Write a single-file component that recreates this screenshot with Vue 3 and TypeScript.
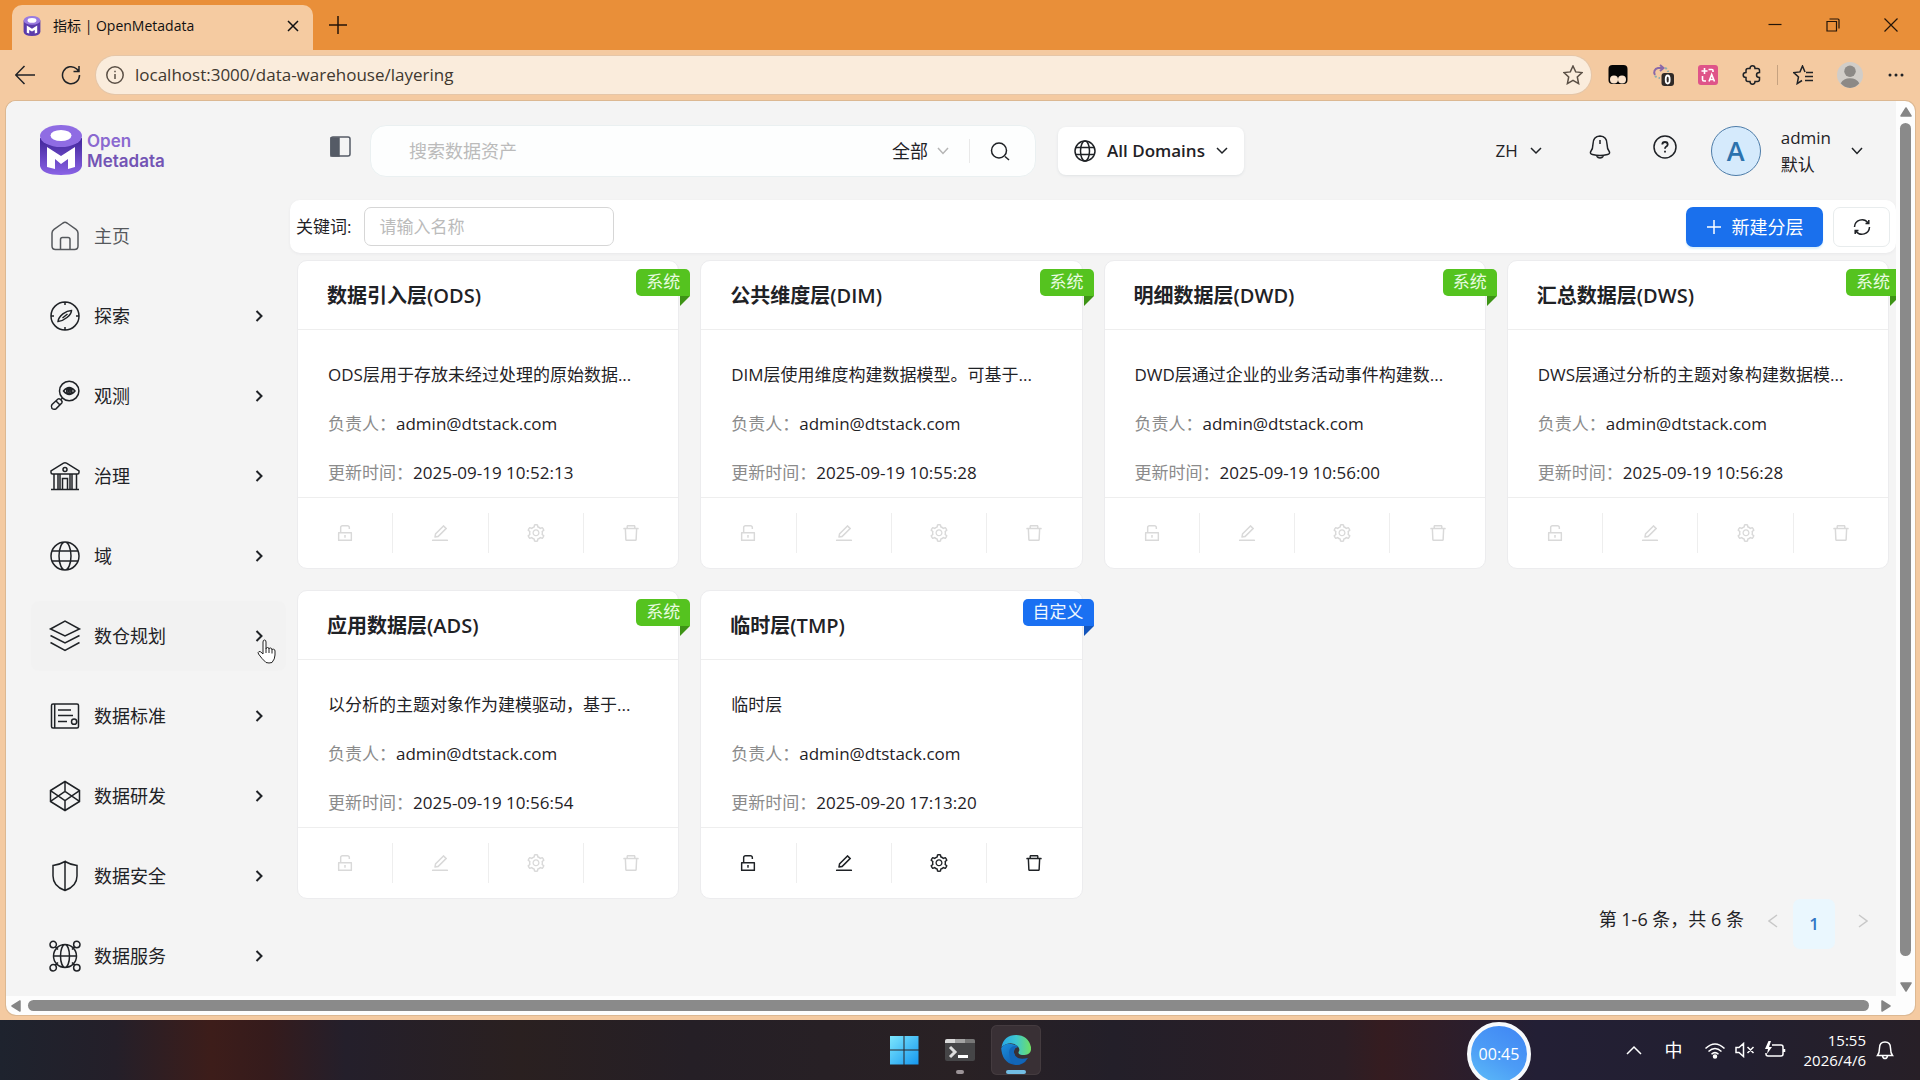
<script setup lang="ts">
import { ref } from 'vue'

interface NavItem {
  label: string
  icon: string
  muted?: boolean
  active?: boolean
}

interface LayerCard {
  name: string
  code: string
  description: string
  updatedAt: string
  custom?: boolean
}

const url = ref('localhost:3000/data-warehouse/layering')
const search = ref('')
const scope = ref('全部')
const keyword = ref('')

const navItems: NavItem[] = [
  {
    label: '主页',
    muted: true,
    icon: 'M2 12Q2 9.8 4 8.3L13 2Q15 .7 17 2L26 8.3Q28 9.8 28 12V25Q28 28.5 24.5 28.5H5.5Q2 28.5 2 25ZM10.5 28.5V18.5Q10.5 16.5 12.5 16.5H18Q20 16.5 20 18.5V28.5',
  },
  {
    label: '探索',
    icon: 'M1 15a14 14 0 1 0 28 0a14 14 0 1 0-28 0M15 1v3M15 26v3M1 15h3M26 15h3M8 20.5C8.5 15 16 9.5 21.5 9.5C21.5 14 14 20 8 20.5ZM12.5 17L17.5 13',
  },
  {
    label: '观测',
    icon: 'M9.5 10a9.7 9.7 0 1 0 19.4 0a9.7 9.7 0 1 0-19.4 0M13.5 10Q19.2 3 25 10Q19.2 17 13.5 10ZM16.7 10a2.6 2.6 0 1 0 5.2 0a2.6 2.6 0 1 0-5.2 0M18.3 10a1 1 0 1 0 2 0a1 1 0 1 0-2 0M12.5 17L10.3 19M2 23.5L8 18Q9 17.2 10.2 18.3L11.5 19.5Q12.7 21 11.8 22L6 27.8Q4 29 2 27.5Q.6 25.5 2 23.5ZM6 20l4 4',
  },
  {
    label: '治理',
    icon: 'M1 11.5V9.8L13.5 2.2Q15 1.3 16.5 2.2L29 9.8V11.5Q29 13 27.5 13H2.5Q1 13 1 11.5ZM13 8.5a2 2 0 1 0 4 0a2 2 0 1 0-4 0M1 28.5H29M4 13V28M8 13V28M10 13V28M20 13V28M22 13V28M26.5 13V28M12.5 28V17.5H17.5V28',
  },
  {
    label: '域',
    icon: 'M1 15a14 14 0 1 0 28 0a14 14 0 1 0-28 0M9 15a6 14 0 1 0 12 0a6 14 0 1 0-12 0M2 10H28M2 20H28',
  },
  {
    label: '数仓规划',
    active: true,
    icon: 'M.5 8L15 0L29.5 8L15 15ZM.5 14.5L15 22L29.5 14.5M.5 21.5L15 29.5L29.5 21.5',
  },
  {
    label: '数据标准',
    icon: 'M3 3H27Q28.5 3 28.5 4.5V25.5Q28.5 27 27 27H3Q1.5 27 1.5 25.5V4.5Q1.5 3 3 3ZM4.7 3V27M8 9H21M8 14.5H23M8 20.5H17M21.5 20.7a2.6 2.6 0 1 0 5.2 0a2.6 2.6 0 1 0-5.2 0',
  },
  {
    label: '数据研发',
    icon: 'M15 .5L29.5 9.5V20.5L15 29.5L.5 20.5V9.5ZM15 .5V10.5M15 19.5V29.5M.5 9.7L15 19.5L29.5 9.7M.5 20.3L15 10.5L29.5 20.3',
  },
  {
    label: '数据安全',
    icon: 'M15 .5Q20 3.5 27 4.5V15C27 22 22 27 15 29.5C8 27 3 22 3 15V4.5Q10 3.5 15 .5V29.5',
  },
  {
    label: '数据服务',
    icon: 'M3.5 15a11.5 11.5 0 1 0 23 0a11.5 11.5 0 1 0-23 0M10.5 15a4.5 11.5 0 1 0 9 0a4.5 11.5 0 1 0-9 0M3.5 15H26.5M0 3.5a3.2 3.2 0 1 0 6.4 0a3.2 3.2 0 1 0-6.4 0M23.6 3.5a3.2 3.2 0 1 0 6.4 0a3.2 3.2 0 1 0-6.4 0M0 26.7a3.2 3.2 0 1 0 6.4 0a3.2 3.2 0 1 0-6.4 0M23.6 26.7a3.2 3.2 0 1 0 6.4 0a3.2 3.2 0 1 0-6.4 0M5.5 6L8 8.5M24.5 6L22 8.5M5.5 24L8 21.5M24.5 24L22 21.5',
  },
]

const layers: LayerCard[] = [
  { name: '数据引入层', code: '(ODS)', description: 'ODS层用于存放未经过处理的原始数据...', updatedAt: '2025-09-19 10:52:13' },
  { name: '公共维度层', code: '(DIM)', description: 'DIM层使用维度构建数据模型。可基于...', updatedAt: '2025-09-19 10:55:28' },
  { name: '明细数据层', code: '(DWD)', description: 'DWD层通过企业的业务活动事件构建数...', updatedAt: '2025-09-19 10:56:00' },
  { name: '汇总数据层', code: '(DWS)', description: 'DWS层通过分析的主题对象构建数据模...', updatedAt: '2025-09-19 10:56:28' },
  { name: '应用数据层', code: '(ADS)', description: '以分析的主题对象作为建模驱动，基于...', updatedAt: '2025-09-19 10:56:54' },
  { name: '临时层', code: '(TMP)', description: '临时层', updatedAt: '2025-09-20 17:13:20', custom: true },
]

const actions = [
  {
    label: '解锁',
    path: 'M832 464H332V240c0-30.9 25.1-56 56-56h248c30.9 0 56 25.1 56 56v68c0 4.4 3.6 8 8 8h56c4.4 0 8-3.6 8-8v-68c0-70.7-57.3-128-128-128H388c-70.7 0-128 57.3-128 128v224h-68c-17.7 0-32 14.3-32 32v384c0 17.7 14.3 32 32 32h640c17.7 0 32-14.3 32-32V496c0-17.7-14.3-32-32-32zm-40 376H232V536h560v304zM484 701v53c0 4.4 3.6 8 8 8h40c4.4 0 8-3.6 8-8v-53a48.01 48.01 0 10-56 0z',
  },
  {
    label: '编辑',
    path: 'M257.7 752c2 0 4-.2 6-.5L431.9 722c2-.4 3.9-1.3 5.3-2.8l423.9-423.9a9.96 9.96 0 000-14.1L694.9 114.9c-1.9-1.9-4.4-2.9-7.1-2.9s-5.2 1-7.1 2.9L256.8 538.8c-1.5 1.5-2.4 3.3-2.8 5.3l-29.5 168.2a33.5 33.5 0 009.4 29.8c6.6 6.4 14.9 9.9 23.8 9.9zm67.4-174.4L687.8 215l73.3 73.3-362.7 362.6-88.9 15.7 15.6-89zM880 836H144c-17.7 0-32 14.3-32 32v36c0 4.4 3.6 8 8 8h784c4.4 0 8-3.6 8-8v-36c0-17.7-14.3-32-32-32z',
  },
  {
    label: '设置',
    path: 'M924.8 625.7l-65.5-56c3.1-19 4.7-38.4 4.7-57.8s-1.6-38.8-4.7-57.8l65.5-56a32.03 32.03 0 009.3-35.2l-.9-2.6a443.74 443.74 0 00-79.7-137.9l-1.8-2.1a32.12 32.12 0 00-35.1-9.5l-81.3 28.9c-30-24.6-63.5-44-99.7-57.6l-15.7-85a32.05 32.05 0 00-25.8-25.7l-2.7-.5c-52.1-9.4-106.9-9.4-159 0l-2.7.5a32.05 32.05 0 00-25.8 25.7l-15.8 85.4a351.86 351.86 0 00-99 57.4l-81.9-29.1a32 32 0 00-35.1 9.5l-1.8 2.1a446.02 446.02 0 00-79.7 137.9l-.9 2.6c-4.5 12.5-.8 26.5 9.3 35.2l66.3 56.6c-3.1 18.8-4.6 38-4.6 57.1 0 19.2 1.5 38.4 4.6 57.1L99 625.5a32.03 32.03 0 00-9.3 35.2l.9 2.6c18.1 50.4 44.9 96.9 79.7 137.9l1.8 2.1a32.12 32.12 0 0035.1 9.5l81.9-29.1c29.8 24.5 63.1 43.9 99 57.4l15.8 85.4a32.05 32.05 0 0025.8 25.7l2.7.5a449.4 449.4 0 00159 0l2.7-.5a32.05 32.05 0 0025.8-25.7l15.7-85a350 350 0 0099.7-57.6l81.3 28.9a32 32 0 0035.1-9.5l1.8-2.1c34.8-41.1 61.6-87.5 79.7-137.9l.9-2.6c4.5-12.3.8-26.3-9.3-35zM788.3 465.9c2.5 15.1 3.8 30.6 3.8 46.1s-1.3 31-3.8 46.1l-6.6 40.1 74.7 63.9a370.03 370.03 0 01-42.6 73.6L721 702.8l-31.4 25.8c-23.9 19.6-50.5 35-79.3 45.8l-38.1 14.3-17.9 97a377.5 377.5 0 01-85 0l-17.9-97.2-37.8-14.5c-28.5-10.8-55-26.2-78.7-45.7l-31.4-25.9-93.4 33.2c-17-22.9-31.2-47.6-42.6-73.6l75.5-64.5-6.5-40c-2.4-14.9-3.7-30.3-3.7-45.5 0-15.3 1.2-30.6 3.7-45.5l6.5-40-75.5-64.5c11.3-26.1 25.6-50.7 42.6-73.6l93.4 33.2 31.4-25.9c23.7-19.5 50.2-34.9 78.7-45.7l37.9-14.3 17.9-97.2c28.1-3.2 56.8-3.2 85 0l17.9 97 38.1 14.3c28.7 10.8 55.4 26.2 79.3 45.8l31.4 25.8 92.8-32.9c17 22.9 31.2 47.6 42.6 73.6L781.8 426l6.5 39.9zM512 326c-97.2 0-176 78.8-176 176s78.8 176 176 176 176-78.8 176-176-78.8-176-176-176zm79.2 255.2A111.6 111.6 0 01512 614c-29.9 0-58-11.7-79.2-32.8A111.6 111.6 0 01400 502c0-29.9 11.7-58 32.8-79.2C454 401.6 482.1 390 512 390c29.9 0 58 11.6 79.2 32.8A111.6 111.6 0 01624 502c0 29.9-11.7 58-32.8 79.2z',
  },
  {
    label: '删除',
    path: 'M360 184h-8c4.4 0 8-3.6 8-8v8h304v-8c0 4.4 3.6 8 8 8h-8v72h72v-80c0-35.3-28.7-64-64-64H352c-35.3 0-64 28.7-64 64v80h72v-72zm504 72H160c-17.7 0-32 14.3-32 32v32c0 4.4 3.6 8 8 8h60.4l24.7 523c1.6 34.1 29.8 61 63.9 61h454c34.2 0 62.3-26.8 63.9-61l24.7-523H888c4.4 0 8-3.6 8-8v-32c0-17.7-14.3-32-32-32zM731.3 840H292.7l-24.2-512h487l-24.2 512z',
  },
]
</script>

<template>
  <div class="desktop">
    <header class="tab-strip">
      <div class="tab">
        <svg class="favicon" viewBox="0 0 42 50">
          <path d="M0 11V40Q2 50 21 50T42 40V11Z" fill="#5b3cab" />
          <ellipse cx="21" cy="11" rx="21" ry="11" fill="#9a7be0" />
          <ellipse cx="21" cy="11" rx="11" ry="6" fill="#fff" />
          <path d="M8 24L21 32L34 24V42L28 44V35L21 39L14 35V44L8 42Z" fill="#fff" />
        </svg>
        <span class="tab-title">指标 | OpenMetadata</span>
        <button class="icon-btn" aria-label="关闭标签页">
          <svg width="12" height="12" viewBox="0 0 12 12"><path d="M1 1L11 11M11 1L1 11" /></svg>
        </button>
      </div>
      <button class="icon-btn new-tab" aria-label="新建标签页">
        <svg width="20" height="20" viewBox="0 0 20 20"><path d="M10 1V19M1 10H19" /></svg>
      </button>
      <div class="window-controls">
        <button class="icon-btn" aria-label="最小化">
          <svg width="14" height="14" viewBox="0 0 14 14"><path d="M.5 6.5H13.5" /></svg>
        </button>
        <button class="icon-btn" aria-label="还原">
          <svg width="14" height="14" viewBox="0 0 14 14"><path d="M1 3.5H10.5V13H1ZM3.5 1H12Q13 1 13 2V10.5" /></svg>
        </button>
        <button class="icon-btn" aria-label="关闭">
          <svg width="14" height="14" viewBox="0 0 14 14"><path d="M.5 .5L13.5 13.5M13.5 .5L.5 13.5" /></svg>
        </button>
      </div>
    </header>

    <div class="browser-bar">
      <button class="icon-btn" aria-label="后退">
        <svg width="20" height="20" viewBox="0 0 20 20"><path d="M9.5 1L.7 10L9.5 19M.7 10H20" /></svg>
      </button>
      <button class="icon-btn reload" aria-label="刷新">
        <svg width="20" height="20" viewBox="0 0 20 20"><path d="M18.5 10A8.5 8.5 0 1 1 15.8 4L18 6.5M18 1V6.5H12.5" /></svg>
      </button>
      <div class="address">
        <svg width="18" height="18" viewBox="0 0 18 18"><circle cx="9" cy="9" r="8.2" /><path d="M9 8V13M9 4.8V6.3" /></svg>
        <input v-model="url" class="url" type="text" aria-label="地址栏" />
        <button class="icon-btn" aria-label="收藏">
          <svg width="20" height="20" viewBox="0 0 20 20"><path d="M10 1L12.7 6.9L19 7.6L14.3 12L15.6 18.6L10 15.4L4.4 18.6L5.7 12L1 7.6L7.3 6.9Z" /></svg>
        </button>
      </div>
      <div class="extensions">
        <button class="icon-btn" aria-label="脚本扩展">
          <svg width="20" height="20" viewBox="0 0 20 20"><rect x=".5" y="0" width="19" height="19" rx="4" fill="#050505" stroke="none" /><circle cx="6" cy="14.5" r="4" fill="#fbe3cc" stroke="none" /><circle cx="14" cy="14.5" r="4" fill="#fbe3cc" stroke="none" /></svg>
        </button>
        <button class="icon-btn" aria-label="跳转扩展">
          <svg width="22" height="22" viewBox="0 0 22 22"><path d="M11 4H6A4.500 4.500 0 0 0 3 11M8 1L11.500 4L8 7" stroke="#8a68a8" stroke-width="2" /><path d="M13 4Q16 5 16 8M3 12Q5 14 8 14" stroke="#8fb0ae" stroke-width="2" stroke-dasharray="2 2" /><rect x="9.500" y="9" width="12.500" height="13" rx="3" fill="#302a27" stroke="none" /><ellipse cx="15.700" cy="15.500" rx="2" ry="4" stroke="#fff" stroke-width="1.800" /></svg>
        </button>
        <button class="icon-btn" aria-label="翻译扩展">
          <svg width="20" height="20" viewBox="0 0 20 20"><rect width="20" height="20" rx="3" fill="#df5489" stroke="none" /><path d="M6.5 3V9M3.5 6H9.5M10.5 4.500H14Q15 4.500 15 5.500V7M4.500 11V14.500Q4.500 16 6 16H8M11 16.500L13.700 9.500L16.500 16.500M12 14.500H15.500" stroke="#fff" stroke-width="1.600" /></svg>
        </button>
        <button class="icon-btn" aria-label="扩展">
          <svg width="20" height="20" viewBox="0 0 20 20"><path d="M6 3.5H8Q8 .8 10.5 .8T13 3.5H15.5Q17.5 3.5 17.5 5.5V7.5Q14.5 7.5 14.5 10T17.5 12.5V14.5Q17.5 16.5 15.5 16.5H13Q13 19.2 10.5 19.2T8 16.5H6Q4 16.5 4 14.5V12.5Q1.2 12.5 1.2 10T4 7.5V5.5Q4 3.5 6 3.5Z" /></svg>
        </button>
        <i class="bar-divider"></i>
        <button class="icon-btn" aria-label="收藏夹">
          <svg width="20" height="20" viewBox="0 0 20 20"><path d="M12 7L9.5 1L7 6.9L.8 7.6L5.5 12L4.2 18.6L9 15.5M13 7.5H20M12 11.5H20M12 15.5H20" /></svg>
        </button>
        <button class="icon-btn" aria-label="个人资料">
          <svg width="26" height="26" viewBox="0 0 28 28"><circle cx="14" cy="14" r="14" fill="#d1cdc8" stroke="none" /><circle cx="14" cy="10" r="6.2" fill="#8c8986" stroke="none" /><path d="M4 23Q7 17.5 14 17.5T24 23Q20 28 14 28T4 23Z" fill="#8c8986" stroke="none" /></svg>
        </button>
        <button class="icon-btn" aria-label="更多">
          <svg class="dots" width="18" height="18" viewBox="0 0 18 18"><circle cx="3" cy="9" r="1.500" /><circle cx="9" cy="9" r="1.500" /><circle cx="15" cy="9" r="1.500" /></svg>
        </button>
      </div>
    </div>

    <div class="frame">
      <div class="viewport">
        <div class="app">
          <aside class="sidebar">
            <a class="brand" href="#">
              <svg width="42" height="50" viewBox="0 0 42 50">
                <defs>
                  <linearGradient id="drum" x1="0" y1="0" x2="0" y2="1">
                    <stop offset="0" stop-color="#402599" />
                    <stop offset="1" stop-color="#8a63e6" />
                  </linearGradient>
                </defs>
                <path d="M0 13V41Q2 50 21 50T42 41V13Z" fill="url(#drum)" />
                <ellipse cx="21" cy="11" rx="21" ry="11" fill="#8f6ce3" />
                <ellipse cx="21" cy="10.5" rx="10.5" ry="5.5" fill="#fff" />
                <path d="M7 22L21 31L35 22V42L28 44V34L21 39L15 34V44L7 42Z" fill="#fff" />
              </svg>
              <span class="brand-name"><span class="brand-open">Open</span><span>Metadata</span></span>
            </a>
            <nav class="nav">
              <a v-for="item in navItems" :key="item.label" href="#" class="nav-item" :class="{ muted: item.muted, active: item.active }">
                <svg class="nav-icon" viewBox="0 0 30 30"><path :d="item.icon" /></svg>
                <span class="nav-label">{{ item.label }}</span>
                <svg v-if="!item.muted" class="nav-arrow" viewBox="0 0 8 12"><path d="M1.5 1L6.5 6L1.5 11" /></svg>
                <svg v-if="item.active" class="pointer" viewBox="0 0 19 25">
                  <path d="M6 14V3Q6 1 7.5 1T9 3V10Q9 8.5 10.5 8.5T12 10Q12 9 13.5 9T15 11Q15 10 16.5 10.2T18 12V16Q18 20 15 23.5Q12 24.5 9 23.5Q5 20 1.5 15Q.5 13 2 12.5Q3.5 12 6 15Z" fill="#fff" stroke="#222" />
                  <path d="M9 10V14M12 10V14M15 11V14.5" fill="none" stroke="#222" />
                </svg>
              </a>
            </nav>
          </aside>

          <main class="main">
            <div class="top-bar">
              <button class="icon-btn raised" aria-label="折叠侧栏">
                <svg width="22" height="22" viewBox="0 0 22 22"><rect x="1" y="1" width="19" height="19" rx="2" stroke="#555b66" /><path d="M1 2H9V20H1Z" fill="#555b66" stroke="#555b66" /></svg>
              </button>
              <div class="search">
                <input v-model="search" class="search-input" type="text" placeholder="搜索数据资产" aria-label="搜索数据资产" />
                <select v-model="scope" class="scope" aria-label="搜索范围"><option>全部</option></select>
                <svg class="scope-arrow" width="12" height="8" viewBox="0 0 12 8"><path d="M1 1L6 6.5L11 1" /></svg>
                <i class="search-divider"></i>
                <button class="icon-btn" aria-label="搜索">
                  <svg width="20" height="20" viewBox="0 0 20 20"><circle cx="9" cy="9.5" r="7.5" /><path d="M15 15.500L19 19" /></svg>
                </button>
              </div>
              <button class="domains">
                <svg width="22" height="22" viewBox="0 0 22 22"><circle cx="11" cy="11" r="10" /><ellipse cx="11" cy="11" rx="4.5" ry="10" /><path d="M2 7.5H20M2 14.5H20" /></svg>
                <span>All Domains</span>
                <svg width="12" height="8" viewBox="0 0 12 8"><path d="M1 1L6 6L11 1" /></svg>
              </button>
              <div class="user-tools">
                <button class="language">
                  <span>ZH</span>
                  <svg width="12" height="8" viewBox="0 0 12 8"><path d="M1 1L6 6L11 1" /></svg>
                </button>
                <button class="icon-btn bell raised" aria-label="通知">
                  <svg width="22" height="24" viewBox="0 0 22 24"><path d="M11 1Q4 1.5 4 9Q4 14 1.5 17Q1 19 3.5 19.5Q11 21.5 18.5 19.5Q21 19 20.5 17Q18 14 18 9Q18 1.5 11 1ZM7.5 21Q9 23 11 23T14.5 21M11 5V9" /></svg>
                </button>
                <button class="icon-btn help raised" aria-label="帮助">
                  <svg width="24" height="24" viewBox="0 0 24 24"><circle cx="12" cy="12" r="11" /><path d="M9.3 9.5Q9.3 7 12 7T14.7 9.5Q14.7 10.8 13 11.7Q12 12.3 12 13.8M12 15.8V17.5" stroke-width="1.8" /></svg>
                </button>
                <span class="avatar">A</span>
                <div class="user">
                  <span class="user-name">admin</span>
                  <span>默认</span>
                </div>
                <button class="icon-btn" aria-label="用户菜单">
                  <svg width="12" height="8" viewBox="0 0 12 8"><path d="M1 1L6 6.5L11 1" /></svg>
                </button>
              </div>
            </div>

            <div class="filter-bar">
              <label for="keyword">关键词:</label>
              <input id="keyword" v-model="keyword" class="keyword" type="text" placeholder="请输入名称" />
              <button class="create">
                <svg width="16" height="16" viewBox="0 0 16 16"><path d="M8 1V15M1 8H15" /></svg>
                <span>新建分层</span>
              </button>
              <button class="refresh" aria-label="刷新列表">
                <svg width="18" height="18" viewBox="0 0 18 18"><path d="M1.5 9A7.5 7.5 0 0 1 15 4.8M16.5 9A7.5 7.5 0 0 1 3 13.2M15.8 2V5.5H12.5M2.2 16V12.5H5.5" /></svg>
              </button>
            </div>

            <section class="cards">
              <article v-for="layer in layers" :key="layer.code" class="card" :class="{ custom: layer.custom }">
                <h3 class="card-title">{{ layer.name }}<span class="code">{{ layer.code }}</span></h3>
                <div class="card-body">
                  <p>{{ layer.description }}</p>
                  <p><span class="field">负责人：</span>admin@dtstack.com</p>
                  <p><span class="field">更新时间：</span>{{ layer.updatedAt }}</p>
                </div>
                <div class="card-actions">
                  <button v-for="action in actions" :key="action.label" class="action" :disabled="!layer.custom" :aria-label="action.label">
                    <svg width="18" height="18" viewBox="64 64 896 896"><path :d="action.path" /></svg>
                  </button>
                </div>
                <span class="ribbon">{{ layer.custom ? '自定义' : '系统' }}</span>
              </article>
            </section>

            <nav class="pagination" aria-label="分页">
              <span class="total">第 1-6 条，共 6 条</span>
              <button class="page-arrow" disabled aria-label="上一页">
                <svg width="10" height="14" viewBox="0 0 10 14"><path d="M9 1L1 7L9 13" /></svg>
              </button>
              <button class="page">1</button>
              <button class="page-arrow" disabled aria-label="下一页">
                <svg width="10" height="14" viewBox="0 0 10 14"><path d="M1 1L9 7L1 13" /></svg>
              </button>
            </nav>
          </main>
        </div>

        <div class="scroll scroll-y">
          <svg width="12" height="10" viewBox="0 0 12 10"><path d="M6 1L11 9H1Z" /></svg>
          <i class="thumb thumb-y"></i>
          <svg width="12" height="10" viewBox="0 0 12 10"><path d="M6 9L11 1H1Z" /></svg>
        </div>
        <div class="scroll scroll-x">
          <svg width="10" height="12" viewBox="0 0 10 12"><path d="M1 6L9 1V11Z" /></svg>
          <i class="thumb thumb-x"></i>
          <svg width="10" height="12" viewBox="0 0 10 12"><path d="M9 6L1 1V11Z" /></svg>
        </div>
      </div>
    </div>

    <footer class="taskbar">
      <div class="task-apps">
        <button class="task" aria-label="开始">
          <svg width="30" height="30" viewBox="0 0 30 30">
            <defs>
              <linearGradient id="win" x1="0" y1="0" x2="1" y2="1">
                <stop offset="0" stop-color="#7ce6fd" />
                <stop offset="1" stop-color="#1597ee" />
              </linearGradient>
            </defs>
            <path d="M1 1H14.5V14.5H1ZM15.5 1H29.5V14.5H15.5ZM1 15.5H14.5V29.5H1ZM15.5 15.5H29.5V29.5H15.5Z" fill="url(#win)" />
          </svg>
        </button>
        <button class="task" aria-label="终端">
          <svg width="30" height="22" viewBox="0 0 30 22"><rect width="30" height="22" rx="2" fill="#454547" /><path d="M0 4V2Q0 0 2 0H10V4Z" fill="#d9d9d9" /><path d="M10 0H20V4H10Z" fill="#a3a3a3" /><path d="M20 0H28Q30 0 30 2V4H20Z" fill="#777" /><path d="M5 8L10 13L5 18" class="prompt" /><path d="M13 17.5H23" class="prompt-cursor" /></svg>
          <i class="dot"></i>
        </button>
        <button class="task current" aria-label="Microsoft Edge">
          <svg width="30" height="30" viewBox="0 0 30 30">
            <defs>
              <linearGradient id="wave" x1="0" y1="0" x2="1" y2="0">
                <stop offset="0" stop-color="#27a8e6" />
                <stop offset=".5" stop-color="#3ec7cf" />
                <stop offset="1" stop-color="#6fe063" />
              </linearGradient>
              <linearGradient id="sea" x1="0" y1="0" x2="1" y2="1">
                <stop offset="0" stop-color="#1b8fdc" />
                <stop offset="1" stop-color="#0c4fa3" />
              </linearGradient>
            </defs>
            <path d="M.5 12Q3 0 15 0Q27 0 30 12Q31 19 23.5 20Q17 20 17.5 17Q19.5 14.5 17 11.5Q12 6.5 5.5 9Q2 10.5 .5 12Z" fill="url(#wave)" />
            <path d="M.2 13Q4 8 10.5 9Q16 10 17 12Q12.5 12.5 13 18Q15 26.5 25.5 25.5Q20 31 13 29.8Q1 27.5 .2 13Z" fill="url(#sea)" />
            <path d="M8 17Q8.5 11.5 14 11Q17 11.5 17 12Q12.5 12.5 13 18Q15 26 27 23Q22 30 15 30Q8 27 8 17Z" fill="#1266b8" />
          </svg>
          <i class="dot wide"></i>
        </button>
      </div>

      <div class="timer">00:45</div>

      <div class="tray">
        <svg width="16" height="10" viewBox="0 0 16 10"><path d="M1 9L8 2L15 9" /></svg>
        <span class="ime">中</span>
        <svg width="22" height="18" viewBox="0 0 22 18"><path d="M1.5 7.5Q11 -1.5 20.5 7.5M4.5 10.5Q11 4.5 17.5 10.5M7.5 13.2Q11 10 14.5 13.2" /><circle cx="11" cy="15.5" r="1.5" fill="#fff" /></svg>
        <svg class="mute" width="20" height="16" viewBox="0 0 20 16"><path d="M1 5.5H4L8.5 1.5V14.5L4 10.5H1ZM12.5 5L18.5 11M18.5 5L12.5 11" /></svg>
        <svg width="22" height="18" viewBox="0 0 22 18"><path d="M8 4H17Q19 4 19 6V13Q19 15 17 15H4Q2 15 2 13V12M20.5 8V11" /><path d="M4.5 0L1 8H4L3 13L8 6H5L7 0Z" fill="#fff" stroke="none" /></svg>
        <div class="clock"><span>15:55</span><span>2026/4/6</span></div>
        <svg width="18" height="20" viewBox="0 0 18 20"><path d="M1.5 15.5Q3.5 13 3.5 8Q3.5 2 9 2T14.5 8Q14.5 13 16.5 15.5ZM6.5 16Q7 18.5 9 18.5T11.5 16" /></svg>
      </div>
    </footer>
  </div>
</template>

<style>
body {
  margin: 0;
}
</style>

<style scoped>
.desktop {
  display: flex;
  flex-direction: column;
  height: 100vh;
  overflow: hidden;
  background: #f4caa1;
  color: #1f2226;
  font-family: "Open Sans", "Noto Sans CJK SC", sans-serif;
  font-size: 17px;
  line-height: 24px;
}

.desktop *,
.desktop *::before,
.desktop *::after {
  box-sizing: border-box;
}

button,
input,
select {
  margin: 0;
  padding: 0;
  border: 0;
  outline: 0;
  background: none;
  color: inherit;
  font: inherit;
}

svg {
  display: block;
  flex: none;
  fill: none;
  stroke: currentColor;
  stroke-width: 1.5;
}

a {
  color: inherit;
  text-decoration: none;
}

.icon-btn {
  display: flex;
  align-items: center;
  justify-content: center;
  flex: none;
}

/* Browser chrome */
.tab-strip {
  display: flex;
  align-items: flex-end;
  height: 50px;
  flex: none;
  padding-left: 12px;
  background: #e98f39;
  color: #241509;
}

.tab {
  display: flex;
  align-items: center;
  width: 301px;
  height: 45px;
  padding: 0 14px 4px 11px;
  border-radius: 10px 10px 0 0;
  background: #f5cba1;
  color: #111;
  font-size: 14px;
}

.favicon {
  width: 18px;
  height: 20px;
  stroke: none;
}

.tab-title {
  flex: 1;
  margin-left: 12px;
}

.new-tab {
  height: 50px;
  margin-left: 15px;
}

.window-controls {
  display: flex;
  align-items: center;
  gap: 44px;
  height: 50px;
  margin-left: auto;
  padding-right: 22px;
}

.window-controls svg {
  stroke-width: 1.2;
}

.browser-bar {
  display: flex;
  align-items: center;
  height: 50px;
  flex: none;
  padding: 0 15px;
}

.reload {
  margin-left: 26px;
}

.address {
  display: flex;
  align-items: center;
  flex: 1;
  height: 38px;
  margin: 0 17px 0 15px;
  padding: 0 8px 0 10px;
  border-radius: 19px;
  background: #faecdc;
  box-shadow: 0 0 0 1px #e5c6a8;
  color: #5b5046;
}

.url {
  flex: 1;
  margin-left: 11px;
  color: #40382f;
}

.extensions {
  display: flex;
  align-items: center;
  gap: 24px;
}

.bar-divider {
  width: 1px;
  height: 20px;
  margin: 0 -9px;
  background: #c6a280;
}

.dots {
  fill: currentColor;
  stroke: none;
}

.frame {
  display: flex;
  flex: 1;
  min-height: 0;
  padding: 1px 5px 5px 6px;
}

.viewport {
  display: grid;
  grid-template-columns: minmax(0, 1fr) 19px;
  grid-template-rows: minmax(0, 1fr) 19px;
  flex: 1;
  overflow: hidden;
  border-radius: 10px;
  background: #fdfdfd;
  box-shadow: 0 0 0 1px #dcb892;
}

.scroll {
  display: flex;
  align-items: center;
  justify-content: space-between;
}

.scroll svg {
  fill: #858585;
  stroke: #858585;
  stroke-linejoin: round;
}

.scroll-y {
  grid-column: 2;
  grid-row: 1;
  flex-direction: column;
  padding: 6px 0 4px;
}

.scroll-x {
  grid-column: 1;
  grid-row: 2;
  padding: 0 5px;
}

.thumb {
  border-radius: 6px;
  background: #8a8a8a;
}

.thumb-y {
  flex: 1;
  width: 11px;
  margin: 6px 0 26px;
}

.thumb-x {
  flex: 1;
  height: 11px;
  margin: 0 12px 0 7px;
}

/* Application */
.app {
  display: flex;
  grid-column: 1;
  grid-row: 1;
  min-width: 0;
  overflow: hidden;
  background: #f4f4f4;
}

.sidebar {
  width: 284px;
  flex: none;
  padding: 24px 4px 0 25px;
}

.brand {
  display: flex;
  align-items: center;
  gap: 5px;
  height: 50px;
  margin: 0 0 26px 9px;
  color: #7354b5;
  font-family: Inter, sans-serif;
  font-size: 17px;
  font-weight: 600;
  line-height: 20px;
}

.brand svg {
  stroke: none;
}

.brand-name {
  display: flex;
  flex-direction: column;
  padding-top: 2px;
}

.brand-open {
  color: #8a69d0;
}

.nav {
  display: flex;
  flex-direction: column;
  gap: 10px;
}

.nav-item {
  position: relative;
  display: flex;
  align-items: center;
  height: 70px;
  padding: 0 23px 0 19px;
  border-radius: 8px;
  font-size: 18px;
}

.nav-item.active {
  background: #f2f2f2;
}

.nav-item.muted {
  color: #55585c;
}

.nav-icon {
  width: 30px;
  height: 30px;
  overflow: visible;
}

.nav-label {
  flex: 1;
  margin-left: 14px;
}

.nav-arrow {
  width: 8px;
  height: 12px;
  stroke-width: 2;
}

.pointer {
  position: absolute;
  top: 38px;
  right: 10px;
  width: 19px;
  height: 25px;
  stroke-width: 1;
}

.main {
  display: flex;
  flex-direction: column;
  flex: 1;
  min-width: 0;
}

.top-bar {
  display: flex;
  align-items: center;
  height: 99px;
  flex: none;
  padding: 0 33px 0 40px;
}

.raised {
  margin-bottom: 8px;
}

.search {
  display: flex;
  align-items: center;
  flex: 0 1 666px;
  height: 52px;
  margin: 0 22px 0 18px;
  padding: 0 25px 0 38px;
  border: 1px solid #eaf0f1;
  border-radius: 16px;
  background: #fdfefe;
}

.search-input {
  flex: 1;
  min-width: 0;
  font-size: 18px;
}

input::placeholder {
  color: #bbb;
  opacity: 1;
}

.scope {
  appearance: none;
  width: 40px;
  font-size: 18px;
}

.scope-arrow {
  margin-left: 5px;
  color: #b5b5b5;
}

.search-divider {
  width: 1px;
  height: 24px;
  margin: 0 20px;
  background: #e9e9e9;
}

.domains {
  display: flex;
  align-items: center;
  justify-content: space-between;
  width: 186px;
  height: 48px;
  padding: 0 16px;
  border-radius: 8px;
  background: #fff;
  box-shadow: 0 1px 3px #dfe2e4;
  font-weight: 600;
}

.user-tools {
  display: flex;
  align-items: center;
  margin-left: auto;
}

.language {
  display: flex;
  align-items: center;
  gap: 12px;
  font-weight: 500;
}

.bell {
  margin-left: 47px;
}

.help {
  margin-left: 42px;
}

.avatar {
  display: flex;
  align-items: center;
  justify-content: center;
  width: 50px;
  height: 50px;
  margin: 0 20px 0 34px;
  border: 1px solid #4d7ca8;
  border-radius: 50%;
  background: #d5eafc;
  color: #2c72ad;
  font-size: 27px;
  font-weight: 600;
}

.user {
  display: flex;
  flex-direction: column;
  margin-right: 20px;
  line-height: 27px;
}

.user-name {
  font-weight: 500;
}

.filter-bar {
  display: flex;
  align-items: center;
  height: 53px;
  flex: none;
  padding: 0 6px;
  border-radius: 10px;
  background: #fff;
  box-shadow: 0 1px 3px #e8e8ea;
}

.keyword {
  width: 250px;
  height: 39px;
  margin-left: 13px;
  padding: 0 14px;
  border: 1px solid #d6d6d6;
  border-radius: 7px;
}

.create {
  display: flex;
  align-items: center;
  justify-content: center;
  gap: 10px;
  width: 137px;
  height: 40px;
  margin-left: auto;
  border-radius: 7px;
  background: #1a70ed;
  box-shadow: 0 2px 2px #dcf1fb;
  color: #fff;
  font-size: 18px;
}

.refresh {
  display: flex;
  align-items: center;
  justify-content: center;
  width: 57px;
  height: 40px;
  margin-left: 10px;
  border: 1px solid #e8eced;
  border-radius: 7px;
}

.cards {
  display: grid;
  grid-template-columns: repeat(4, minmax(0, 1fr));
  gap: 21px;
  padding: 7px 7px 0;
}

.card {
  position: relative;
  border: 1px solid #ececee;
  border-radius: 10px;
  background: #fff;
}

.card-title {
  height: 69px;
  margin: 0;
  padding: 20px 29px 0;
  border-bottom: 1px solid #eee;
  font-size: 20px;
  font-weight: 700;
  line-height: 30px;
}

.code {
  font-weight: 600;
}

.card-body {
  display: flex;
  flex-direction: column;
  gap: 25px;
  padding: 33px 30px 12px;
}

.card-body p {
  margin: 0;
  white-space: nowrap;
}

.field {
  color: #8b8b8b;
}

.card-actions {
  display: flex;
  padding: 15px 0;
  border-top: 1px solid #eee;
}

.action {
  display: flex;
  align-items: center;
  justify-content: center;
  flex: 1;
  height: 40px;
  border-right: 1px solid #eee;
}

.action:last-child {
  border-right: 0;
}

.action svg {
  fill: currentColor;
  stroke: none;
}

.action:disabled {
  color: #d9d9d9;
}

.ribbon {
  position: absolute;
  top: 8px;
  right: -12px;
  height: 27px;
  padding: 0 10px;
  border-radius: 5px 5px 0 5px;
  background: #55c31f;
  color: #e9fbe0;
  line-height: 26px;
}

.ribbon::after {
  content: "";
  position: absolute;
  top: 100%;
  right: 0;
  border: 5px solid #3d9315;
  border-right-color: transparent;
  border-bottom-color: transparent;
}

.custom .ribbon {
  background: #1a70f2;
  color: #f0f8ff;
}

.custom .ribbon::after {
  border-top-color: #1355bb;
  border-left-color: #1355bb;
}

.pagination {
  display: flex;
  align-items: center;
  justify-content: flex-end;
  padding-right: 28px;
}

.total {
  margin: 0 24px 10px 0;
  font-size: 18px;
}

.page-arrow {
  margin-bottom: 6px;
  color: #c8c8c8;
}

.page {
  width: 42px;
  height: 50px;
  margin: 0 23px 0 15px;
  border-radius: 7px;
  background: #eaf7fe;
  color: #3376c4;
  font-weight: 600;
}

/* System taskbar */
.taskbar {
  position: relative;
  display: grid;
  grid-template-columns: 1fr auto 1fr;
  align-items: center;
  height: 60px;
  flex: none;
  background: linear-gradient(90deg, #1e232e 0, #241f29 6%, #3d1d1a 11%, #351b1c 14%, #241f2b 18%, #2a2020 27%, #251f26 36%, #292124 50%, #231f29 58%, #2c1e25 70%, #351c20 72%, #231f35 80%, #221f30 90%, #271f27 100%);
  color: #fff;
}

.task-apps {
  display: flex;
  grid-column: 2;
  gap: 6px;
}

.task {
  position: relative;
  display: flex;
  align-items: center;
  justify-content: center;
  width: 50px;
  height: 50px;
  border-radius: 6px;
}

.task svg {
  stroke: none;
}

.task.current {
  background: #393035;
  box-shadow: inset 0 0 0 1px #443b3f;
}

.prompt {
  fill: none;
  stroke: #ddd;
  stroke-width: 3;
}

.prompt-cursor {
  stroke: #fff;
  stroke-width: 3;
}

.dot {
  position: absolute;
  bottom: 1px;
  left: 50%;
  width: 8px;
  height: 4px;
  margin-left: -4px;
  border-radius: 2px;
  background: #9c9498;
}

.dot.wide {
  width: 20px;
  margin-left: -10px;
  background: #72bde4;
}

.timer {
  position: absolute;
  top: 2px;
  right: 389px;
  display: flex;
  align-items: center;
  justify-content: center;
  width: 64px;
  height: 64px;
  border: 4px solid #f7fafc;
  border-radius: 50%;
  background: linear-gradient(30deg, #5dbdf8, #4c9cf6 45%, #3f85f4);
  font-size: 16px;
}

.tray {
  display: flex;
  align-items: center;
  grid-column: 3;
  justify-self: end;
  padding-right: 26px;
  font-size: 15px;
  line-height: 20px;
}

.ime {
  margin: 0 21px 0 23px;
  font-size: 18px;
}

.mute {
  margin: 0 9px;
}

.clock {
  display: flex;
  flex-direction: column;
  align-items: flex-end;
  margin: 0 10px 0 18px;
}
</style>
